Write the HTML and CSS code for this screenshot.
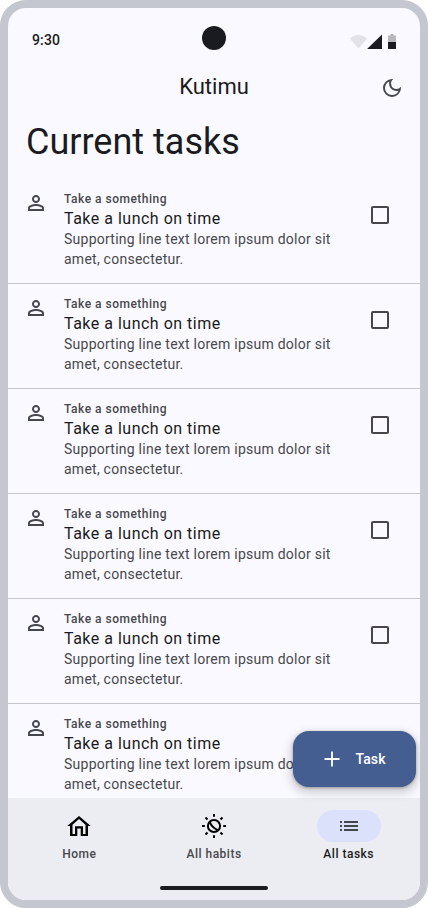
FILE: index.html
```html
<!DOCTYPE html>
<html lang="en">
<head>
<meta charset="utf-8">
<title>Kutimu</title>
<link rel="stylesheet" href="styles.css">
</head>
<body>
<svg class="defs" aria-hidden="true">
  <symbol id="person" viewBox="0 0 24 24"><path d="M12 5.9a2.1 2.1 0 1 1 0 4.2 2.1 2.1 0 0 1 0-4.2m0 9c2.97 0 6.1 1.46 6.1 2.1v1.1H5.9V17c0-.64 3.13-2.1 6.1-2.1M12 4C9.79 4 8 5.79 8 8s1.79 4 4 4 4-1.79 4-4-1.79-4-4-4zm0 9c-2.67 0-8 1.34-8 4v3h16v-3c0-2.66-5.33-4-8-4z"/></symbol>
</svg>
<div class="phone">
  <header class="status">
    <span class="time">9:30</span>
    <span class="camera"></span>
    <svg class="signals" width="46" height="16" viewBox="0 0 46 16">
      <path d="M8.500 14.500 0 4.800C4.800-.4 12.200-.4 17 4.800z" fill="#1a1b20" opacity=".1"/>
      <path d="M17.300 15V14.700L32 .6V15z" fill="#1a1b20"/>
      <path d="M38 8V1.500h2.500V0h3v1.500H46V8z" fill="#1a1b20" opacity=".3"/>
      <path d="M38 8h8v6.500l-.5.5h-7l-.5-.5z" fill="#1a1b20"/>
    </svg>
  </header>
  <div class="appbar">
    <span class="brand">Kutimu</span>
    <svg class="moon" width="24" height="24" viewBox="0 0 24 24"><path d="M9.370 5.510A7.350 7.350 0 0 0 9.100 7.500c0 4.080 3.320 7.400 7.400 7.400.68 0 1.350-.09 1.990-.27A7.014 7.014 0 0 1 12 19c-3.860 0-7-3.140-7-7 0-2.930 1.810-5.450 4.370-6.490zM12 3a9 9 0 1 0 9 9c0-.46-.04-.92-.1-1.360a5.389 5.389 0 0 1-4.400 2.260 5.403 5.403 0 0 1-3.140-9.800C12.920 3.040 12.460 3 12 3z"/></svg>
  </div>
  <h1>Current tasks</h1>
  <main class="list">
    <article class="item"><svg class="avatar"><use href="#person"/></svg><div class="copy"><p class="over">Take a something</p><h2>Take a lunch on time</h2><p class="support">Supporting line text lorem ipsum dolor sit amet, consectetur.</p></div><span class="check"></span></article>
    <article class="item"><svg class="avatar"><use href="#person"/></svg><div class="copy"><p class="over">Take a something</p><h2>Take a lunch on time</h2><p class="support">Supporting line text lorem ipsum dolor sit amet, consectetur.</p></div><span class="check"></span></article>
    <article class="item"><svg class="avatar"><use href="#person"/></svg><div class="copy"><p class="over">Take a something</p><h2>Take a lunch on time</h2><p class="support">Supporting line text lorem ipsum dolor sit amet, consectetur.</p></div><span class="check"></span></article>
    <article class="item"><svg class="avatar"><use href="#person"/></svg><div class="copy"><p class="over">Take a something</p><h2>Take a lunch on time</h2><p class="support">Supporting line text lorem ipsum dolor sit amet, consectetur.</p></div><span class="check"></span></article>
    <article class="item"><svg class="avatar"><use href="#person"/></svg><div class="copy"><p class="over">Take a something</p><h2>Take a lunch on time</h2><p class="support">Supporting line text lorem ipsum dolor sit amet, consectetur.</p></div><span class="check"></span></article>
    <article class="item"><svg class="avatar"><use href="#person"/></svg><div class="copy"><p class="over">Take a something</p><h2>Take a lunch on time</h2><p class="support">Supporting line text lorem ipsum dolor sit amet, consectetur.</p></div></article>
  </main>
  <footer class="bottom">
    <nav class="tabs">
      <a class="tab"><span class="pill"><svg width="24" height="24" viewBox="0 0 24 24"><path fill-rule="evenodd" d="M12 2 .3 12H3v10h7.300v-7.500h3.400V22H21V12h2.700zM12 5l6.500 5.700V20h-2.500v-7.700H8V20H5.500v-9.300z"/></svg></span>Home</a>
      <a class="tab"><span class="pill"><svg width="24" height="24" viewBox="0 0 24 24"><g fill="none" stroke="#000" stroke-width="2"><circle cx="12" cy="12" r="6.100"/><path d="M7.800 7.800Q9.500 13.700 16.200 16.200"/><path d="M12 0v2.800M12 21.200V24M0 12h2.800M21.200 12H24M3.500 3.500l2 2M18.500 18.500l2 2M3.500 20.500l2-2M18.500 5.500l2-2"/></g></svg></span>All habits</a>
      <a class="tab active"><span class="pill"><svg width="24" height="24" viewBox="0 0 24 24"><path d="M7 7h14v2H7zM7 11h14v2H7zM7 15h14v2H7zM3 7h2v2H3zM3 11h2v2H3zM3 15h2v2H3z" fill="#44464f"/></svg></span>All tasks</a>
    </nav>
    <div class="handle"></div>
  </footer>
  <button class="fab"><svg width="24" height="24" viewBox="0 0 24 24"><path d="M19.500 12.900h-6.600v6.600h-1.800v-6.600H4.500v-1.800h6.600V4.500h1.800v6.600h6.600z" fill="#fff"/></svg>Task</button>
</div>
</body>
</html>
```
FILE: styles.css
```css
* { box-sizing: border-box; }
body { margin: 0; background: #fff; font-family: Roboto, sans-serif; color: #1a1b20; }
.defs { position: absolute; width: 0; height: 0; }
.phone {
  position: relative;
  display: flex;
  flex-direction: column;
  width: 428px;
  height: 908px;
  border: 8px solid #c4c6d0;
  border-radius: 26px;
  background: #faf9ff;
  overflow: hidden;
}
.status {
  display: grid;
  grid-template-columns: 1fr 24px 1fr;
  align-items: end;
  flex: none;
  height: 52px;
  padding: 0 24px 10px;
}
.time { font-size: 14px; line-height: 20px; font-weight: 500; letter-spacing: .14px; }
.camera { width: 24px; height: 24px; border-radius: 50%; background: #1a1b20; }
.signals { justify-self: end; }
.appbar {
  display: grid;
  grid-template-columns: 48px 1fr 48px;
  align-items: center;
  flex: none;
  height: 56px;
  padding: 0 4px;
}
.brand { grid-column: 2; text-align: center; font-size: 22px; line-height: 28px; padding-bottom: 3px; }
.moon { justify-self: center; fill: #44474e; }
h1 { flex: none; margin: 0; padding: 4px 18px 15px; font-size: 36px; line-height: 44px; font-weight: 400; }
.list { flex: 1; min-height: 0; overflow: hidden; }
.item { display: flex; gap: 16px; height: 105px; padding: 12px 31px 0 16px; border-bottom: 1px solid #c4c6d0; }
.avatar { flex: none; width: 24px; height: 24px; fill: #44474e; }
.copy { width: 284px; }
.copy p, h2 { margin: 0; }
.copy .over { font-size: 12px; line-height: 16px; font-weight: 500; letter-spacing: .5px; color: #47484c; }
h2 { font-size: 16px; line-height: 24px; font-weight: 400; letter-spacing: .5px; }
.copy .support { margin-top: -2px; font-size: 14px; line-height: 20px; letter-spacing: .25px; color: #47484c; }
.check { flex: none; width: 18px; height: 18px; margin: 15px 0 0 auto; border: 2px solid #49454f; border-radius: 2px; }
.bottom { flex: none; height: 102px; background: #ecedf2; }
.tabs { display: flex; gap: 8px; height: 80px; padding: 0 8px; }
.tab {
  flex: 1;
  display: flex;
  flex-direction: column;
  align-items: center;
  gap: 4px;
  padding-top: 12px;
  font-size: 12px;
  line-height: 16px;
  font-weight: 500;
  letter-spacing: .5px;
  color: #47484c;
}
.pill { display: flex; align-items: center; justify-content: center; width: 64px; height: 32px; border-radius: 16px; }
.active { color: #1a1b20; }
.active .pill { background: #dbe1fa; }
.handle { width: 108px; height: 4px; margin: 8px auto 0; border-radius: 2px; background: #1a1b20; }
.fab {
  position: absolute;
  left: 285px;
  top: 723px;
  display: flex;
  align-items: center;
  gap: 12px;
  width: 123px;
  height: 56px;
  padding: 0 0 0 26.5px;
  border: 0;
  border-radius: 16px;
  background: #445e91;
  color: #fff;
  font: 500 14px/20px Roboto, sans-serif;
  letter-spacing: .1px;
  box-shadow: 0 1px 3px rgba(0,0,0,.3), 0 4px 8px 3px rgba(0,0,0,.15);
}
```
